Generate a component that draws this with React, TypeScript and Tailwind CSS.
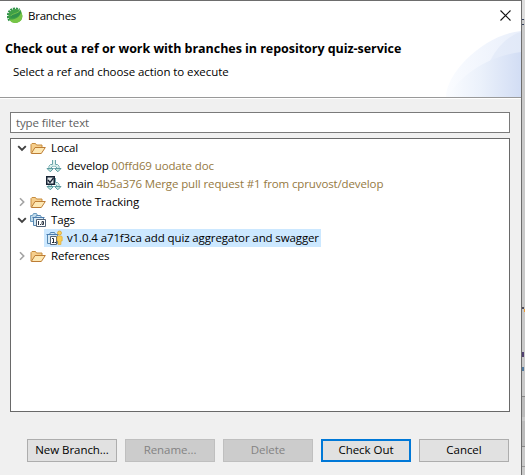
import React from 'react';

function Logo() {
  return (
    <svg width="17" height="17" viewBox="0 0 17 17" className="shrink-0">
      <path d="M2.500 13.500A7.400 7.400 0 0 1 12.500 2.800" fill="none" stroke="#2f9148" strokeWidth="2.200" strokeDasharray="2 .8" />
      <circle cx="8.400" cy="8.900" r="7" fill="#3fa047" />
      <path d="M2.200 12.500C9 13 14.500 8.500 14 3.500l1.400 5.400A7.100 7.100 0 0 1 2.200 12.500z" fill="#77c546" />
      <path d="M3.500 10.500C4.500 5.500 11.500 7 14 2.500 14.500 8.500 9 12 3.500 10.500z" fill="#31924a" />
      <path d="M3.800 9C5 6.500 11 6.800 13.500 3" fill="none" stroke="#7cc64c" strokeWidth=".9" />
    </svg>
  );
}

function Folder() {
  return (
    <svg width="16" height="16" viewBox="0 0 16 16" className="shrink-0">
      <path d="M1 13V4.500L2 3.500h3.500l1 1.500H12v2.500" fill="#f6cf8d" stroke="#c68c3e" />
      <path d="M1.300 13.500L5 7.500h10.300l-4 6z" fill="#fde8b4" stroke="#bd7d35" strokeLinejoin="round" />
    </svg>
  );
}

function Branch({ checked = false }: { checked?: boolean }) {
  return (
    <svg width="16" height="16" viewBox="0 0 16 16" className="shrink-0">
      <path d="M6.500 2v4.500h-2L3 8v2M9.500 2v4.500h2L13 8v2M5.500 10V9L8 7.800 10.500 9v1" fill="none" stroke="#6ba5aa" />
      <path d="M8 2v5M4.300 10V8.200L8 7l3.700 1.200V10" fill="none" stroke="#d3eee8" strokeWidth="1.500" />
      <path d="M1 10.500h6.500l-3.200 3.300zM8.500 10.500H15l-3.200 3.300z" fill="#b9e2da" stroke="#5b9aa0" strokeLinejoin="round" />
      {checked && (
        <>
          <path d="M0 0h9v9H0z" fill="#172333" />
          <path d="M1.500 1.500h6v6h-6z" fill="#e3e7ea" />
          <path d="M2 4l2 2.500L7.500 2" fill="none" stroke="#172333" strokeWidth="1.300" />
        </>
      )}
    </svg>
  );
}

function Tag({ single = false }: { single?: boolean }) {
  return (
    <svg width="17" height="16" viewBox="0 0 17 16" className="shrink-0">
      {!single && <path d="M.5 3.500h2l1-2h3l1 2h2v6h-9z" fill="#bfdaeb" stroke="#6b9cc0" />}
      <path d={single ? 'M1.500 13.500v-9h2l1-2h4l1 2h2v9z' : 'M3.500 13.500v-8h2l1-2h4l1 2h2v8z'} fill="#d6e9f4" stroke="#5587b2" />
      <path d={single ? 'M.5 4.500h12' : 'M2.500 5.500h12'} stroke="#4c7cae" />
      {single ? (
        <>
          <path d="M4.500 6.500h6v8h-6z" fill="#fff" stroke="#526276" />
          <path d="M6 8.500h1.500v4M6 12.500h2.500M9 12.500h1" fill="none" stroke="#222b35" />
          <path d="M11.500 6h4l.7 1v4H15v3.500h-3V11h-1V7z" fill="#f8cc55" stroke="#dca52f" strokeWidth=".6" />
          <circle cx="13.500" cy="3" r="2" fill="#fad25e" stroke="#d89c28" strokeWidth=".7" />
        </>
      ) : (
        <>
          <path d="M6.500 7.500h9v7h-9z" fill="#fff" stroke="#526276" />
          <path d="M8.500 9v4M10 12.500h1M12 9.500h1.500v3H12z" fill="none" stroke="#303a47" />
        </>
      )}
    </svg>
  );
}

function Chevron({ open = false }: { open?: boolean }) {
  return (
    <svg width="10" height="10" viewBox="0 0 10 10" className="shrink-0">
      <path d={open ? 'M1.200 3.200L5 7l3.800-3.800' : 'M3 1.300L6.700 5 3 8.700'} fill="none" stroke={open ? '#404040' : '#a3a3a3'} strokeWidth={open ? 1.9 : 1.6} />
    </svg>
  );
}

function Group({ label, open, tags }: { label: string; open?: boolean; tags?: boolean }) {
  return (
    <div className="flex h-[18px] items-center pl-[6px]">
      <Chevron open={open} />
      <span className="ml-[3px] flex w-[21px]">{tags ? <Tag /> : <Folder />}</span>
      <span>{label}</span>
    </div>
  );
}

const button = 'flex h-[23px] w-[90px] items-center justify-center pb-px';

export default function App() {
  return (
    <div className="flex h-[475px] w-[525px] overflow-hidden bg-[#c8c8c8] font-['Open_Sans','Noto_Sans',sans-serif] text-[11.5px] leading-[18px] tracking-[-0.12px] whitespace-nowrap text-black">
      <main className="flex h-full w-[522px] shrink-0 flex-col border-t border-r border-[#6d6d6d] bg-[#f0f0f0]">
        <header className="relative h-[97px] shrink-0 border-b border-[#999] bg-white">
          <svg width="75" height="66" viewBox="0 0 75 66" className="absolute right-0 bottom-0">
            <defs>
              <linearGradient id="outer"><stop stopColor="#fafcff" /><stop offset="1" stopColor="#e9effb" /></linearGradient>
              <linearGradient id="inner"><stop stopColor="#fafcff" /><stop offset=".45" stopColor="#ebf1fb" /><stop offset="1" stopColor="#d2ddf4" /></linearGradient>
            </defs>
            <path d="M0 66C0 41 39 3 75 0v66z" fill="url(#outer)" />
            <path d="M44 30C52 14 64 4 75 1v29z" fill="#d8e2f6" opacity=".4" />
            <path d="M1 66C16 42 43 25 75 21v45z" fill="url(#inner)" />
          </svg>
          <div className="flex h-[29px] items-center pl-[7px]">
            <Logo />
            <span className="ml-[4px] tracking-[-0.25px]">Branches</span>
            <svg width="11" height="11" viewBox="0 0 11 11" className="mr-[10px] ml-auto"><path d="M.5.500l10 10M10.500.500l-10 10" stroke="#111" strokeWidth="1.100" /></svg>
          </div>
          <h1 className="mt-[10px] pl-[5px] text-[12.5px] font-bold tracking-[-0.04px]">Check out a ref or work with branches in repository quiz-service</h1>
          <p className="mt-[5px] pl-[13px] tracking-[-0.08px]">Select a ref and choose action to execute</p>
        </header>
        <div className="h-px shrink-0 bg-white" />
        <div className="mt-[13px] ml-[10px] flex h-[21px] w-[500px] shrink-0 items-center border border-[#7a7a7a] bg-white pl-[5px] text-[#606060]">
          <span>type filter text</span>
        </div>
        <section className="mt-[5px] ml-[10px] h-[274px] w-[500px] shrink-0 border border-[#696969] bg-white">
          <Group label="Local" open />
          <div className="flex h-[18px] items-center pl-[35px]">
            <Branch /><span className="ml-[5px]">develop <span className="text-[#95793f]">00ffd69 uodate doc</span></span>
          </div>
          <div className="flex h-[18px] items-center pl-[35px]">
            <Branch checked /><span className="ml-[5px]">main <span className="text-[#95793f]">4b5a376 Merge pull request #1 from cpruvost/develop</span></span>
          </div>
          <Group label="Remote Tracking" />
          <Group label="Tags" open tags />
          <div className="ml-[33px] flex h-[18px] w-[277px] items-center bg-[#cce8ff] pl-[2px]">
            <Tag single /><span className="ml-[4px]">v1.0.4 a71f3ca add quiz aggregator and swagger</span>
          </div>
          <Group label="References" />
        </section>
        <footer className="mt-[27px] ml-[27px] flex gap-[8px] tracking-[-0.05px]">
          <button className={`${button} border border-[#adadad] bg-[#e1e1e1]`}>New Branch...</button>
          <button disabled className={`${button} border border-[#bfbfbf] bg-[#ccc] text-[#838383]`}>Rename...</button>
          <button disabled className={`${button} border border-[#bfbfbf] bg-[#ccc] text-[#838383]`}>Delete</button>
          <button className={`${button} border-2 border-[#0078d7] bg-[#e1e1e1]`}>Check Out</button>
          <button className={`${button} border border-[#adadad] bg-[#e1e1e1]`}>Cancel</button>
        </footer>
      </main>
      <aside className="flex w-[3px] flex-col bg-[#c9c9c9]">
        <div className="h-[19px] shrink-0 bg-[#dedede]" />
        <div className="h-px w-[2px] bg-[#34405c]" />
        <div className="mt-[4px] h-px w-[2px] bg-[#34405c]" />
        <div className="mt-[282px] h-[2px] w-[2px] bg-[#504c58]" />
        <div className="ml-[2px] h-[3px] w-px bg-[#e89a35]" />
        <div className="mt-[40px] h-[5px] w-[2px] bg-[#504070]" />
        <div className="mt-[10px] h-[4px] w-[2px] bg-[#52789b]" />
        <div className="mt-[25px] h-px bg-[#888]" />
        <div className="h-[20px] bg-[#bbb]" />
        <div className="mt-[4px] h-[26px] border-b border-[#888] bg-[#bbb]" />
        <div className="mt-[19px] h-px bg-[#999]" />
      </aside>
    </div>
  );
}
